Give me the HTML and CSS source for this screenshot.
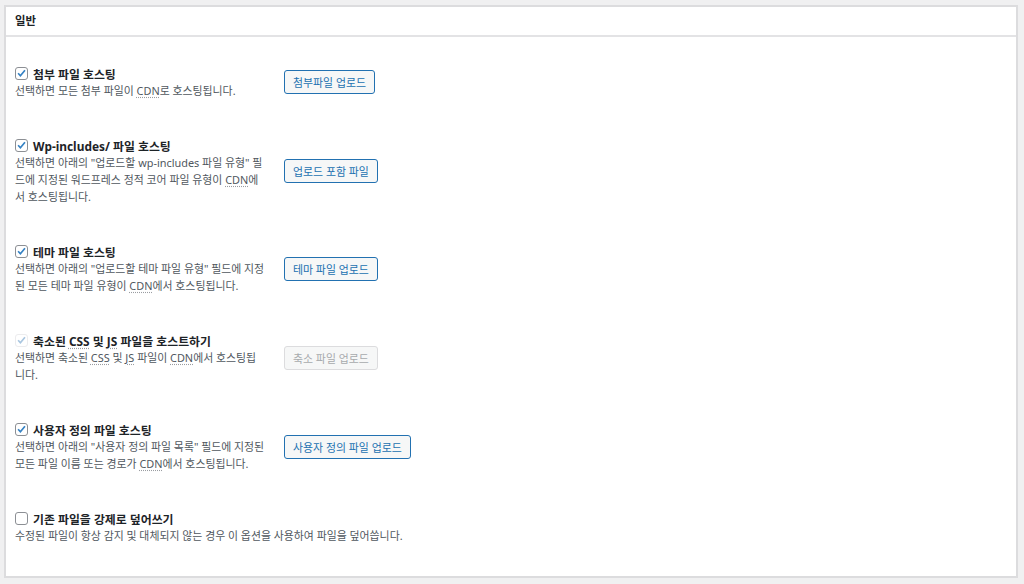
FILE: index.html
```html
<!DOCTYPE html>
<html lang="ko">
<head>
<meta charset="utf-8">
<title>일반</title>
<link rel="stylesheet" href="styles.css">
</head>
<body>
<div class="panel">
  <div class="panel-head">일반</div>
  <div class="panel-body">
    <div class="row">
      <div class="info">
        <label class="title"><span class="cb checked"><svg viewBox="0 0 13 13"><path d="M2.5 6.2 L5.2 9.2 L10.6 2.6"/></svg></span><span>첨부 파일 호스팅</span></label>
        <p class="desc">선택하면 모든 첨부 파일이 <abbr>CDN</abbr>로 호스팅됩니다.</p>
      </div>
      <button class="btn">첨부파일 업로드</button>
    </div>
    <div class="row">
      <div class="info">
        <label class="title"><span class="cb checked"><svg viewBox="0 0 13 13"><path d="M2.5 6.2 L5.2 9.2 L10.6 2.6"/></svg></span><span>Wp-includes/ 파일 호스팅</span></label>
        <p class="desc">선택하면 아래의 "업로드할 wp-includes 파일 유형" 필드에 지정된 워드프레스 정적 코어 파일 유형이 <abbr>CDN</abbr>에서 호스팅됩니다.</p>
      </div>
      <button class="btn">업로드 포함 파일</button>
    </div>
    <div class="row">
      <div class="info">
        <label class="title"><span class="cb checked"><svg viewBox="0 0 13 13"><path d="M2.5 6.2 L5.2 9.2 L10.6 2.6"/></svg></span><span>테마 파일 호스팅</span></label>
        <p class="desc">선택하면 아래의 "업로드할 테마 파일 유형" 필드에 지정된 모든 테마 파일 유형이 <abbr>CDN</abbr>에서 호스팅됩니다.</p>
      </div>
      <button class="btn">테마 파일 업로드</button>
    </div>
    <div class="row">
      <div class="info">
        <label class="title"><span class="cb checked disabled"><svg viewBox="0 0 13 13"><path d="M2.5 6.2 L5.2 9.2 L10.6 2.6"/></svg></span><span>축소된 <abbr>CSS</abbr> 및 <abbr>JS</abbr> 파일을 호스트하기</span></label>
        <p class="desc">선택하면 축소된 <abbr>CSS</abbr> 및 <abbr>JS</abbr> 파일이 <abbr>CDN</abbr>에서 호스팅됩<br>니다.</p>
      </div>
      <button class="btn" disabled>축소 파일 업로드</button>
    </div>
    <div class="row">
      <div class="info">
        <label class="title"><span class="cb checked"><svg viewBox="0 0 13 13"><path d="M2.5 6.2 L5.2 9.2 L10.6 2.6"/></svg></span><span>사용자 정의 파일 호스팅</span></label>
        <p class="desc">선택하면 아래의 "사용자 정의 파일 목록" 필드에 지정된 모든 파일 이름 또는 경로가 <abbr>CDN</abbr>에서 호스팅됩니다.</p>
      </div>
      <button class="btn">사용자 정의 파일 업로드</button>
    </div>
    <div class="row">
      <div class="info wide">
        <label class="title"><span class="cb"></span><span>기존 파일을 강제로 덮어쓰기</span></label>
        <p class="desc">수정된 파일이 항상 감지 및 대체되지 않는 경우 이 옵션을 사용하여 파일을 덮어씁니다.</p>
      </div>
    </div>
  </div>
</div>
</body>
</html>
```

FILE: styles.css
```css
* { box-sizing: border-box; }

html, body {
  background: #f0f0f1;
}

body {
  margin: 5px 6px 6px 4px;
  font-family: "Noto Sans", "Noto Sans CJK KR", sans-serif;
  color: #1d2327;
}

.panel {
  background: #fff;
  border: 2px solid #dcdcde;
  height: 573px;
}

.panel-head {
  height: 30px;
  line-height: 28px;
  padding-left: 9px;
  font-size: 11.4px;
  font-weight: 600;
  border-bottom: 2px solid #e3e3e5;
}

.panel-body {
  padding: 28px 9px 30px;
  display: flex;
  flex-direction: column;
  gap: 38px;
}

.row {
  display: flex;
  align-items: center;
}

.info {
  width: 252px;
  flex: none;
}

.info.wide {
  width: auto;
}

.title {
  display: flex;
  align-items: center;
  height: 17px;
  font-size: 11.9px;
  font-weight: 700;
  color: #1d2327;
  white-space: nowrap;
}

.cb {
  width: 13px;
  height: 13px;
  border: 1px solid #8c8f94;
  border-radius: 3px;
  background: #fff;
  margin-right: 5px;
  display: flex;
  align-items: center;
  justify-content: center;
  flex: none;
}

.cb svg {
  width: 11px;
  height: 11px;
  fill: none;
  stroke: #3582c4;
  stroke-width: 2;
}

.cb.disabled {
  border-color: #ececee;
}

.cb.disabled svg {
  stroke: #a9c6e0;
}

.desc {
  margin: 0;
  font-size: 10.9px;
  line-height: 17px;
  color: #50575e;
}

abbr {
  text-decoration: underline dotted #9a9da1;
  text-underline-offset: 2px;
}

.btn {
  margin-left: 17px;
  height: 24px;
  padding: 0 8px;
  font-family: inherit;
  font-size: 10.9px;
  color: #2271b1;
  background: #f6f7f7;
  border: 1px solid #2271b1;
  border-radius: 3px;
}

.btn:disabled {
  color: #a7aaad;
  border-color: #dcdcde;
  background: #f6f7f7;
}
```
